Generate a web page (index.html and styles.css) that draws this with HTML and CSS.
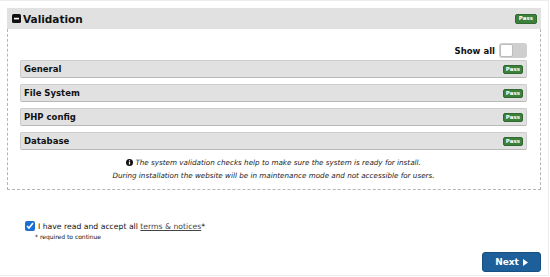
FILE: index.html
```html
<!DOCTYPE html>
<html lang="en">
<head>
<meta charset="UTF-8">
<title>Install - Validation</title>
<link rel="stylesheet" href="styles.css">
</head>
<body>

<div class="page">
    <div class="panel">
        <div class="panel-head">
            <div class="panel-title">
                <svg class="collapse-icon" width="9" height="9" viewBox="0 0 9 9">
                    <rect x="0" y="0" width="9" height="9" rx="1.5" fill="#111"/>
                    <rect x="2" y="3.8" width="5" height="1.6" fill="#fff"/>
                </svg>
                <span>Validation</span>
            </div>
            <span class="badge">Pass</span>
        </div>

        <div class="panel-body">
            <div class="show-all">
                <span>Show all</span>
                <span class="toggle"><span class="knob"></span></span>
            </div>

            <div class="check-row">
                <span>General</span>
                <span class="badge">Pass</span>
            </div>
            <div class="check-row">
                <span>File System</span>
                <span class="badge">Pass</span>
            </div>
            <div class="check-row">
                <span>PHP config</span>
                <span class="badge">Pass</span>
            </div>
            <div class="check-row">
                <span>Database</span>
                <span class="badge">Pass</span>
            </div>

            <p class="info">
                <svg class="info-icon" width="7" height="7" viewBox="0 0 8 8">
                    <circle cx="4" cy="4" r="4" fill="#111"/>
                    <rect x="3.3" y="3.3" width="1.4" height="3" fill="#fff"/>
                    <rect x="3.3" y="1.5" width="1.4" height="1.2" fill="#fff"/>
                </svg>
                The system validation checks help to make sure the system is ready for install.<br>
                During installation the website will be in maintenance mode and not accessible for users.
            </p>
        </div>
    </div>

    <div class="accept">
        <label class="accept-line">
            <input type="checkbox" checked>
            <span>I have read and accept all <a href="#">terms &amp; notices</a>*</span>
        </label>
        <div class="required">* required to continue</div>
    </div>

    <div class="actions">
        <button class="btn-next">Next
            <svg width="5" height="7" viewBox="0 0 5 7"><path d="M0 0 L5 3.5 L0 7 Z" fill="#fff"/></svg>
        </button>
    </div>
</div>

</body>
</html>
```

FILE: styles.css
```css
body {
    margin: 0;
    background: #ffffff;
    color: #111;
    font-family: "DejaVu Sans", Verdana, sans-serif;
}

.page {
    box-sizing: border-box;
    width: 549px;
    height: 276px;
    border: 1px solid #ececec;
    border-left: none;
    padding: 7px 7px 0 7px;
    display: flex;
    flex-direction: column;
}

/* --- validation panel --- */
.panel-head {
    height: 21px;
    background: #e1e1e1;
    display: flex;
    align-items: center;
    justify-content: space-between;
    padding: 0 4px 0 5px;
}

.panel-title {
    display: flex;
    align-items: center;
    gap: 2px;
    font-size: 10.5px;
    font-weight: bold;
}

.badge {
    background: #3b7f3b;
    border: 1px solid #2f6b2f;
    border-radius: 2px;
    color: #fff;
    font-size: 5.5px;
    font-weight: bold;
    padding: 0 2px;
    height: 9px;
    line-height: 9px;
    box-sizing: border-box;
    display: flex;
    align-items: center;
}

.panel-head .badge {
    height: 10px;
    padding: 0 3px;
}

.panel-body {
    border: 1px dashed #b5b5b5;
    border-top: none;
    padding: 14px 13px 0 12px;
    height: 161px;
    box-sizing: border-box;
}

.show-all {
    display: flex;
    justify-content: flex-end;
    align-items: center;
    gap: 4px;
    font-size: 8.5px;
    font-weight: bold;
    margin-bottom: 2px;
}

.toggle {
    width: 28px;
    height: 15px;
    box-sizing: border-box;
    background: #cfcfcf;
    border-radius: 3px;
    padding: 1px;
    display: flex;
}

.knob {
    width: 13px;
    height: 13px;
    background: #fff;
    border: 1px solid #bdbdbd;
    border-radius: 2px;
    box-sizing: border-box;
}

.check-row {
    height: 18px;
    box-sizing: border-box;
    background: #e1e1e1;
    border: 1px solid #cdcdcd;
    border-bottom-color: #b9b9b9;
    border-radius: 2px;
    display: flex;
    align-items: center;
    justify-content: space-between;
    padding: 0 3px 0 3px;
    margin-bottom: 6px;
    font-size: 8.5px;
    font-weight: bold;
}

.info {
    margin: 4px 0 0 0;
    text-align: center;
    font-size: 7.2px;
    font-style: italic;
    line-height: 13px;
    color: #222;
}

.info-icon {
    vertical-align: -1px;
}

/* --- terms --- */
.accept {
    margin-top: 31px;
    padding-left: 18px;
}

.accept-line {
    display: flex;
    align-items: center;
    font-size: 7.7px;
}

.accept-line input {
    width: 10px;
    height: 10px;
    margin: 0 3px 0 0;
    accent-color: #1a6fd1;
}

.accept-line a {
    color: #444;
}

.required {
    font-size: 6px;
    margin: 2px 0 0 10px;
}

.actions {
    display: flex;
    justify-content: flex-end;
    margin-top: auto;
    padding-bottom: 3px;
}

.btn-next {
    width: 59px;
    height: 20px;
    background: #1c5f9a;
    border: 1px solid #174f80;
    border-radius: 3px;
    color: #fff;
    font-family: "DejaVu Sans", Verdana, sans-serif;
    font-size: 9px;
    font-weight: bold;
    display: flex;
    align-items: center;
    justify-content: center;
    gap: 4px;
    padding: 0;
}
```
